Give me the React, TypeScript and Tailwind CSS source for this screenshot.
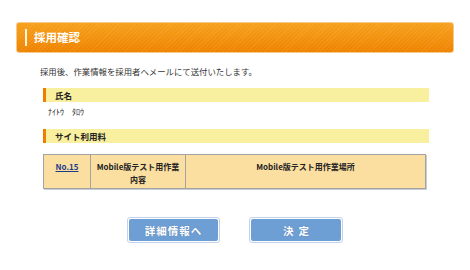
import React from "react";

const font = { fontFamily: '"Noto Sans CJK JP", "Noto Sans", sans-serif' };

const SectionBar: React.FC<{ label: string }> = ({ label }) => (
  <div className="h-[14px] bg-[#f8ef9f] border-l-[3px] border-[#ef7d00] flex items-center pl-[9px] text-[8.5px] font-bold text-[#222] leading-none">
    {label}
  </div>
);

export default function App() {
  return (
    <div className="w-[470px] h-[270px] bg-white overflow-hidden" style={font}>
      <div className="pt-[22px] px-[16px]">
        <div className="h-[31px] rounded-[3px] border border-[#f8c98c] bg-[repeating-linear-gradient(135deg,rgba(255,255,255,0.07)_0_1px,transparent_1px_3px),linear-gradient(#f6a11c,#ee8300)] flex items-center pl-[8px]">
          <span className="w-[2px] h-[17px] bg-[#fff3dc] mr-[7px]" />
          <span className="text-white font-bold text-[11.5px] leading-none">採用確認</span>
        </div>
      </div>

      <p className="mt-[14px] ml-[40px] text-[8.4px] leading-none text-[#333]">
        採用後、作業情報を採用者へメールにて送付いたします。
      </p>

      <div className="ml-[43px] w-[386px] mt-[13px]">
        <SectionBar label="氏名" />
        <p className="mt-[6px] ml-[5px] text-[8px] leading-none text-[#222]">ﾅｲﾄｳ　ﾀﾛｳ</p>
        <div className="mt-[13px]">
          <SectionBar label="サイト利用料" />
        </div>

        <table className="mt-[11px] w-[383px] h-[35px] border-collapse bg-[#fbdfa1] shadow-[1px_1px_0_#c8ccd6] text-[8px] font-bold text-[#222]">
          <tbody>
            <tr>
              <td className="w-[47px] border border-[#a3a3a3] align-top text-center pt-[5px] leading-[13px]">
                <span className="text-[#1b3a8a] underline">No.15</span>
              </td>
              <td className="w-[95px] border border-[#a3a3a3] align-top text-center pt-[5px] leading-[13px]">
                Mobile版テスト用作業<br />内容
              </td>
              <td className="border border-[#a3a3a3] align-top text-center pt-[5px] leading-[13px]">
                Mobile版テスト用作業場所
              </td>
            </tr>
          </tbody>
        </table>
      </div>

      <div className="mt-[28px] flex justify-center gap-[29px]">
        <button className="w-[93px] h-[26px] rounded-[3px] border border-[#c3d2ea] p-[1px] bg-white">
          <span className="flex items-center justify-center w-full h-full rounded-[2px] bg-[#6d9fd5] text-white text-[10.5px] font-bold tracking-[1px] [text-shadow:0_0_1px_#4a6f9c]">
            詳細情報へ
          </span>
        </button>
        <button className="w-[94px] h-[26px] rounded-[3px] border border-[#c3d2ea] p-[1px] bg-white">
          <span className="flex items-center justify-center w-full h-full rounded-[2px] bg-[#6d9fd5] text-white text-[10.5px] font-bold tracking-[5px] pl-[5px] [text-shadow:0_0_1px_#4a6f9c]">
            決定
          </span>
        </button>
      </div>
    </div>
  );
}
